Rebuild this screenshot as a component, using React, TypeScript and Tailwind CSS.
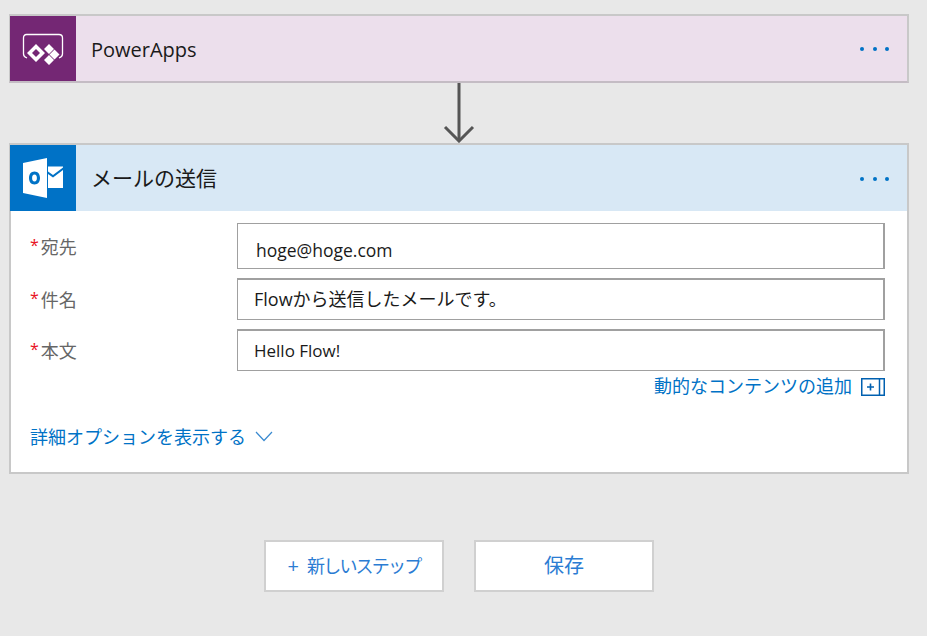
const font = { fontFamily: '"Open Sans", "Noto Sans CJK JP", sans-serif' }

function Dots() {
  return (
    <div className="mt-[1px] mr-[18px] ml-auto flex gap-[8.5px]">
      <span className="h-[4px] w-[4px] rounded-full bg-[#0072c6]" />
      <span className="h-[4px] w-[4px] rounded-full bg-[#0072c6]" />
      <span className="h-[4px] w-[4px] rounded-full bg-[#0072c6]" />
    </div>
  )
}

function PowerAppsIcon() {
  return (
    <svg width="42" height="32" viewBox="0 0 42 32" fill="none">
      <path d="M5 25 C2.5 24 1.5 23 1.5 21 V5 C1.5 3 2.5 1.5 4.5 1.5 H37 C39 1.5 40.5 3 40.5 5 V21 C40.5 23 39.5 24 37 25" stroke="#fff" strokeWidth="1.3" />
      <path fillRule="evenodd" d="M14 11 L23 20 L14 29 L5 20 Z M14 16 L10 20 L14 24 L18 20 Z" fill="#fff" />
      <path d="M27 11 L32 16 L27 21 L22 16 Z M32.5 16.5 L37.5 21.5 L32.5 26.5 L27.5 21.5 Z M27 22 L32 27 L27 32 L22 27 Z" fill="#fff" />
    </svg>
  )
}

function OutlookIcon() {
  return (
    <svg width="42" height="42" viewBox="0 0 42 42">
      <path d="M1 6 L25 1 V41 L1 36 Z" fill="#fff" />
      <path d="M12.5 14.5 C9 14.5 7 17.3 7 21 C7 24.7 9 27.5 12.5 27.5 C16 27.5 18 24.7 18 21 C18 17.3 16 14.5 12.5 14.5 Z M12.5 17.5 C14.1 17.5 14.9 19 14.9 21 C14.9 23 14.1 24.5 12.5 24.5 C10.9 24.5 10.1 23 10.1 21 C10.1 19 10.9 17.5 12.5 17.5 Z" fill="#0072c6" />
      <path d="M26 9.5 H41 V10.5 L31 18 L26 14.5 Z M26 17 L31 20.5 L41 13 V31 H26 Z" fill="#fff" />
    </svg>
  )
}

function Field({ label, value, className, valueClass }: { label: string; value: string; className: string; valueClass: string }) {
  return (
    <div className={`flex ${className}`}>
      <div className="flex w-[226px] items-center pl-[19px] text-[#666666]">
        <span className="mr-[2px] -mt-[3px] text-[16px] text-[#e81123]">*</span>
        <span className="mt-[2px] text-[18px]">{label}</span>
      </div>
      <div className={`flex h-full w-[648px] items-center border border-r-2 border-[#a0a0a0] bg-white text-[#1a1a1a] ${valueClass}`}>
        {value}
      </div>
    </div>
  )
}

export default function App() {
  return (
    <div className="flex h-[636px] w-[927px] flex-col overflow-hidden bg-[#e8e8e8] pt-[14px] pl-[9px]" style={font}>
      <div className="flex h-[69px] w-[900px] items-stretch border-t-2 border-r-2 border-b-2 border-l border-[#c8c8c8] border-b-[#c4bcc4] bg-[#ecdfec]">
        <div className="flex w-[66px] items-center justify-center bg-[#742774]">
          <PowerAppsIcon />
        </div>
        <div className="flex flex-1 items-center">
          <span className="mt-[2px] ml-[15px] text-[20px] text-[#1a1a1a]">PowerApps</span>
          <Dots />
        </div>
      </div>

      <div className="flex h-[60px] w-[900px] justify-center">
        <svg width="32" height="60" viewBox="0 0 32 60" fill="none" stroke="#555555" strokeWidth="3">
          <path d="M16 0 V58" />
          <path d="M2 44 L16 58 L30 44" />
        </svg>
      </div>

      <div className="flex h-[331px] w-[900px] flex-col border-2 border-[#c8c8c8] bg-white">
        <div className="-ml-px flex h-[66px] shrink-0 items-stretch bg-[#d8e8f5]">
          <div className="flex w-[66px] items-center justify-center bg-[#0072c6]">
            <OutlookIcon />
          </div>
          <div className="flex flex-1 items-center">
            <span className="mt-[2px] ml-[15px] text-[21px] text-[#1a1a1a]">メールの送信</span>
            <Dots />
          </div>
        </div>

        <div className="flex flex-1 flex-col pt-[12px]">
          <Field label="宛先" value="hoge@hoge.com" className="h-[46px]" valueClass="pt-[9px] pl-[18px] text-[17.5px]" />
          <Field label="件名" value="Flowから送信したメールです。" className="mt-[9px] h-[42px] items-center" valueClass="border-t-2 pl-[16px] text-[18px]" />
          <Field label="本文" value="Hello Flow!" className="mt-[9px] h-[42px] items-center" valueClass="border-t-2 pl-[16px] text-[17px]" />

          <div className="mt-[2px] mr-[22px] flex items-center justify-end">
            <span className="text-[18px] text-[#0072c6]">動的なコンテンツの追加</span>
            <svg className="ml-[9px]" width="24" height="18" viewBox="0 0 24 18" fill="none">
              <rect x="0.75" y="0.75" width="22.5" height="16.5" stroke="#0060b0" strokeWidth="1.5" />
              <path d="M18.5 1 V17" stroke="#0060b0" strokeWidth="1.5" />
              <path d="M9.5 5.5 V12.5 M6 9 H13" stroke="#0060b0" strokeWidth="1.6" />
            </svg>
          </div>

          <div className="mt-[24px] flex items-center pl-[19px] text-[#0072c6]">
            <span className="text-[18px]">詳細オプションを表示する</span>
            <svg className="mb-[2px] ml-[9px]" width="18" height="11" viewBox="0 0 18 11" fill="none" stroke="#3a8ad0" strokeWidth="1.2">
              <path d="M1 1 L9 9.5 L17 1" />
            </svg>
          </div>
        </div>
      </div>

      <div className="mt-[66px] flex w-[900px] justify-center gap-[30px]">
        <button className="flex h-[52px] w-[180px] items-center justify-center border-2 border-[#d0d0d0] bg-white text-[18px] text-[#2b7cd3]">
          <span className="mr-[8px] text-[20px]">+</span>
          <span className="tracking-[-1.8px]">新しいステップ</span>
        </button>
        <button className="h-[52px] w-[180px] border-2 border-[#d0d0d0] bg-white text-[20px] text-[#2b7cd3]">保存</button>
      </div>
    </div>
  )
}
